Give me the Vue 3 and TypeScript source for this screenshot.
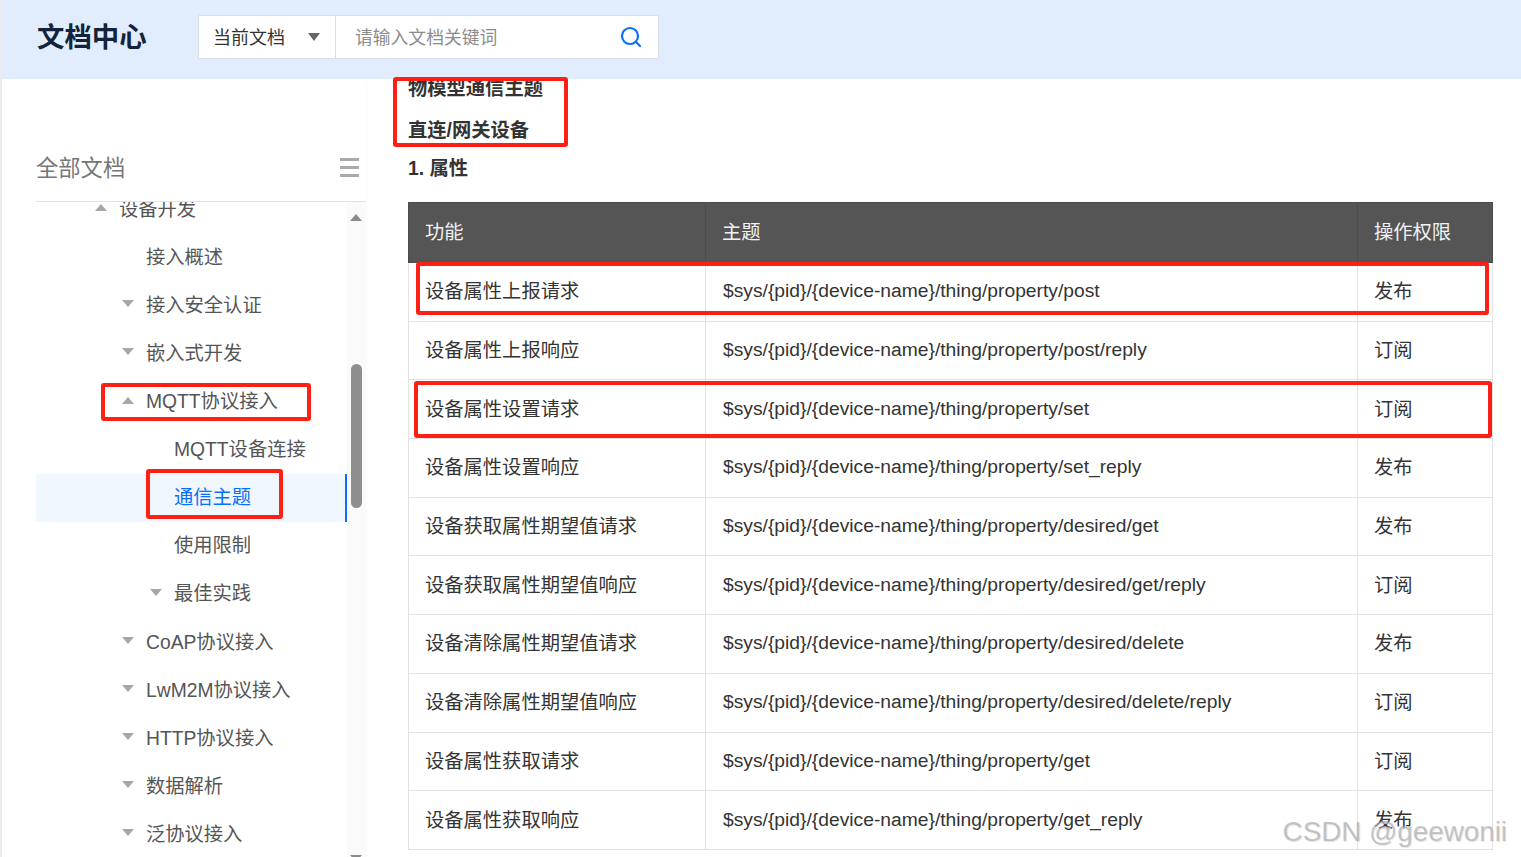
<script setup lang="ts">
interface NavItem {
  label: string;
  level: number;
  arrow?: 'up' | 'down';
  active?: boolean;
}
interface Row {
  name: string;
  topic: string;
  perm: string;
}

const navItems: NavItem[] = [
  { label: '设备开发', level: 0, arrow: 'up' },
  { label: '接入概述', level: 1 },
  { label: '接入安全认证', level: 1, arrow: 'down' },
  { label: '嵌入式开发', level: 1, arrow: 'down' },
  { label: 'MQTT协议接入', level: 1, arrow: 'up' },
  { label: 'MQTT设备连接', level: 2 },
  { label: '通信主题', level: 2, active: true },
  { label: '使用限制', level: 2 },
  { label: '最佳实践', level: 2, arrow: 'down' },
  { label: 'CoAP协议接入', level: 1, arrow: 'down' },
  { label: 'LwM2M协议接入', level: 1, arrow: 'down' },
  { label: 'HTTP协议接入', level: 1, arrow: 'down' },
  { label: '数据解析', level: 1, arrow: 'down' },
  { label: '泛协议接入', level: 1, arrow: 'down' }
];

const prefix = '$sys/{pid}/{device-name}/thing/property/';
const rows: Row[] = [
  { name: '设备属性上报请求', topic: prefix + 'post', perm: '发布' },
  { name: '设备属性上报响应', topic: prefix + 'post/reply', perm: '订阅' },
  { name: '设备属性设置请求', topic: prefix + 'set', perm: '订阅' },
  { name: '设备属性设置响应', topic: prefix + 'set_reply', perm: '发布' },
  { name: '设备获取属性期望值请求', topic: prefix + 'desired/get', perm: '发布' },
  { name: '设备获取属性期望值响应', topic: prefix + 'desired/get/reply', perm: '订阅' },
  { name: '设备清除属性期望值请求', topic: prefix + 'desired/delete', perm: '发布' },
  { name: '设备清除属性期望值响应', topic: prefix + 'desired/delete/reply', perm: '订阅' },
  { name: '设备属性获取请求', topic: prefix + 'get', perm: '订阅' },
  { name: '设备属性获取响应', topic: prefix + 'get_reply', perm: '发布' }
];
</script>

<template>
  <div class="page">
    <header class="topbar">
      <div class="logo">文档中心</div>
      <div class="search">
        <div class="scope">
          <span>当前文档</span>
          <i class="caret"></i>
        </div>
        <div class="keyword">
          <span class="placeholder">请输入文档关键词</span>
          <svg class="search-icon" width="22" height="22" viewBox="0 0 22 22" fill="none" stroke="#0b6ffa" stroke-width="2.2" stroke-linecap="round">
            <circle cx="10" cy="10" r="8" />
            <path d="M16 16l4 4" />
          </svg>
        </div>
      </div>
    </header>

    <div class="body">
      <aside class="sidebar">
        <div class="side-title">
          <span>全部文档</span>
          <div class="burger"><i></i><i></i><i></i></div>
        </div>
        <div class="side-main">
          <ul class="nav">
            <li
              v-for="item in navItems"
              :key="item.label"
              class="nav-item"
              :class="['level-' + item.level, { active: item.active }]"
            >
              <i v-if="item.arrow" class="arrow" :class="item.arrow"></i>
              <span>{{ item.label }}</span>
            </li>
          </ul>
          <div class="scrollbar">
            <i class="sb-up"></i>
            <div class="sb-thumb"></div>
            <i class="sb-down"></i>
          </div>
        </div>
      </aside>

      <main class="content">
        <h3 class="clipped">物模型通信主题</h3>
        <h4>直连/网关设备</h4>
        <h5>1. 属性</h5>
        <table class="topics">
          <colgroup>
            <col class="col-name" />
            <col class="col-topic" />
            <col class="col-perm" />
          </colgroup>
          <thead>
            <tr>
              <th>功能</th>
              <th>主题</th>
              <th>操作权限</th>
            </tr>
          </thead>
          <tbody>
            <tr v-for="row in rows" :key="row.name">
              <td>{{ row.name }}</td>
              <td class="topic-cell">{{ row.topic }}</td>
              <td>{{ row.perm }}</td>
            </tr>
          </tbody>
        </table>
      </main>
    </div>

    <!-- red annotation boxes drawn over the screenshot -->
    <div class="mark mark-heading"></div>
    <div class="mark mark-mqtt"></div>
    <div class="mark mark-topic"></div>
    <div class="mark mark-row1"></div>
    <div class="mark mark-row3"></div>
    <div class="watermark">CSDN @geewonii</div>
  </div>
</template>

<style scoped>
.page {
  position: relative;
  width: 1521px;
  height: 857px;
  overflow: hidden;
  box-sizing: border-box;
  border-left: 2px solid #ececec;
  background: #fff;
  font-family: "Liberation Sans", "Noto Sans CJK SC", sans-serif;
  font-size: 19.3px;
  color: #333;
}

.topbar {
  position: relative;
  z-index: 2;
  height: 79px;
  box-sizing: border-box;
  display: flex;
  align-items: center;
  padding: 0 0 5px 35px;
  background: #e1edfc;
}
.logo {
  width: 161px;
  padding-bottom: 4px;
  font-size: 27.4px;
  font-weight: 700;
  color: #13233a;
}
.search {
  width: 461px;
  height: 44px;
  box-sizing: border-box;
  display: flex;
  background: #fff;
  border: 1px solid #d9dfe7;
}
.scope {
  width: 137px;
  box-sizing: border-box;
  display: flex;
  align-items: center;
  justify-content: space-between;
  padding: 0 15px 0 14px;
  border-right: 1px solid #d9dfe7;
  font-size: 18px;
  color: #333;
}
.scope span {
  padding-bottom: 3px;
}
.caret {
  width: 0;
  height: 0;
  border-left: 6.5px solid transparent;
  border-right: 6.5px solid transparent;
  border-top: 8px solid #666;
}
.keyword {
  flex: 1;
  display: flex;
  align-items: center;
  justify-content: space-between;
  padding: 0 16px 0 19px;
}
.placeholder {
  padding-bottom: 2px;
  font-size: 17.8px;
  color: #8c8c8c;
}
.search-icon {
  display: block;
}

.body {
  display: flex;
  height: 778px;
}

.sidebar {
  width: 364px;
  flex: none;
  box-sizing: border-box;
  padding-left: 34px;
  display: flex;
  flex-direction: column;
  box-shadow: 1px 0 3px rgba(0, 0, 0, 0.02);
}
.side-title {
  height: 123px;
  box-sizing: border-box;
  padding-top: 75px;
  display: flex;
  justify-content: space-between;
  border-bottom: 1px solid #e3e3e3;
  font-size: 22.3px;
  line-height: 30px;
  color: #777;
}
.burger {
  width: 19px;
  margin: 4px 7px 0 0;
}
.burger i {
  display: block;
  height: 3px;
  margin-bottom: 5px;
  background: #aaa;
}
.side-main {
  flex: 1;
  min-height: 0;
  display: flex;
  overflow: hidden;
}
.nav {
  flex: 1;
  margin: -16.9px 0 0;
  padding: 0;
  list-style: none;
}
.nav-item {
  height: 48.1px;
  display: flex;
  align-items: center;
  padding-bottom: 3px;
  color: #555;
  box-sizing: border-box;
}
.level-0 {
  padding-left: 83px;
}
.level-1 {
  padding-left: 110px;
}
.level-2 {
  padding-left: 138px;
}
.nav-item.active {
  background: #f0f7ff;
  border-right: 2px solid #0b6ffa;
  color: #0b6ffa;
}
.arrow {
  width: 0;
  height: 0;
  margin-left: -24px;
  margin-right: 12px;
  border-left: 6px solid transparent;
  border-right: 6px solid transparent;
}
.arrow.up {
  border-bottom: 7px solid #a6a6a6;
}
.arrow.down {
  border-top: 7px solid #a6a6a6;
}

.scrollbar {
  position: relative;
  width: 19px;
  flex: none;
  background: #fafafa;
}
.sb-up,
.sb-down {
  position: absolute;
  left: 3px;
  width: 0;
  height: 0;
  border-left: 6.5px solid transparent;
  border-right: 6.5px solid transparent;
}
.sb-up {
  top: 12px;
  border-bottom: 7px solid #8a8a8a;
}
.sb-down {
  top: 653px;
  border-top: 7px solid #8a8a8a;
}
.sb-thumb {
  position: absolute;
  top: 162px;
  left: 4px;
  width: 11px;
  height: 144px;
  border-radius: 6px;
  background: #8e8e8e;
}

.content {
  flex: 1;
  min-width: 0;
  overflow: hidden;
  padding-left: 42px;
}
.content h3,
.content h4,
.content h5 {
  margin: 0;
  font-size: 19.3px;
  font-weight: 700;
  line-height: 28px;
  color: #333;
}
.content .clipped {
  margin-top: -4px;
}
.content h4 {
  margin-top: 14px;
}
.content h5 {
  margin-top: 10px;
  margin-bottom: 19px;
}

.topics {
  width: 1084px;
  table-layout: fixed;
  border-collapse: collapse;
}
.col-name {
  width: 297px;
}
.col-topic {
  width: 652px;
}
.col-perm {
  width: 135px;
}
.topics th {
  height: 60px;
  box-sizing: border-box;
  padding: 0 16px 4px;
  text-align: left;
  font-weight: 400;
  color: #f2f2f2;
  background: #555;
  border: 1px solid #4b4b4b;
}
.topics td {
  height: 58.7px;
  box-sizing: border-box;
  padding: 0 16px 3px;
  color: #333;
  border: 1px solid #e2e2e2;
}
.topics td.topic-cell {
  padding: 0 16px 1px 17px;
  font-size: 19.25px;
}

.mark {
  position: absolute;
  z-index: 3;
  box-sizing: border-box;
  border: 4px solid #ff2015;
  border-radius: 3px;
}
.mark-heading {
  left: 391px;
  top: 77px;
  width: 175px;
  height: 70px;
}
.mark-mqtt {
  left: 99px;
  top: 383px;
  width: 210px;
  height: 38px;
}
.mark-topic {
  left: 144px;
  top: 469px;
  width: 137px;
  height: 50px;
}
.mark-row1 {
  left: 414px;
  top: 262px;
  width: 1073px;
  height: 53px;
}
.mark-row3 {
  left: 412px;
  top: 381px;
  width: 1078px;
  height: 57px;
}
.watermark {
  position: absolute;
  z-index: 4;
  right: 14px;
  top: 814px;
  font-size: 27.8px;
  line-height: 36px;
  color: rgba(165, 165, 165, 0.6);
  text-shadow: 1px 1px 1px rgba(215, 215, 215, 0.7);
}
</style>

<style>
html,
body {
  margin: 0;
  overflow: hidden;
}
</style>
